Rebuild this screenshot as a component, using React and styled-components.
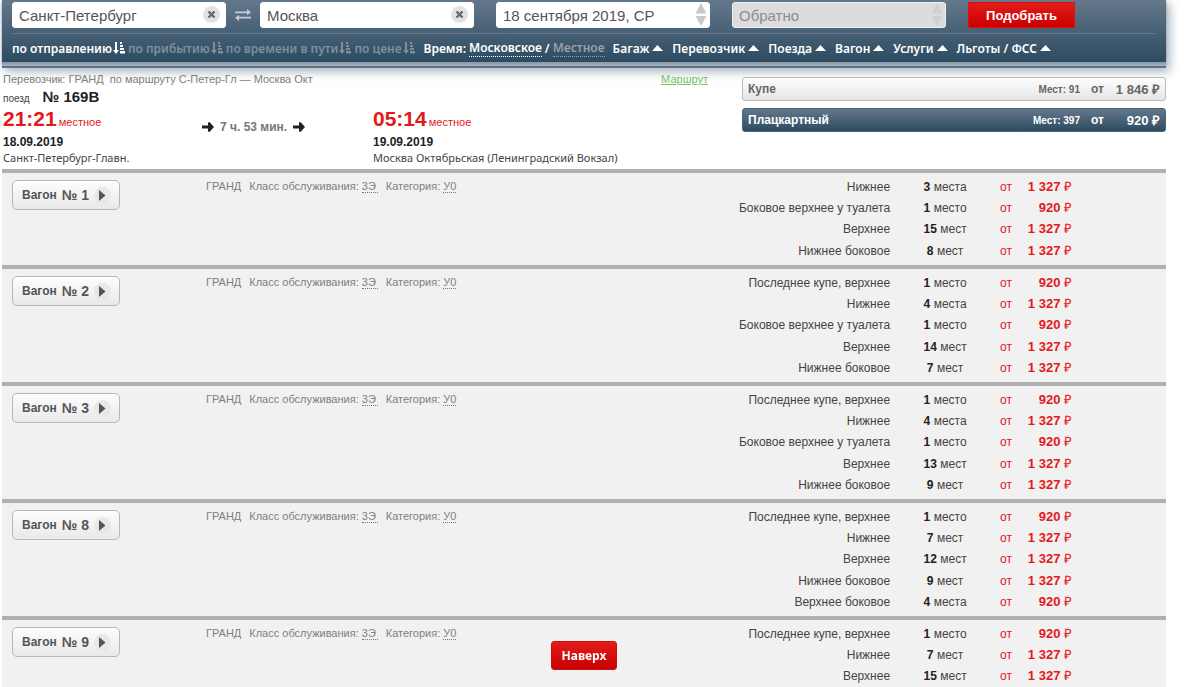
import styled, { createGlobalStyle } from "styled-components";

const GlobalStyle = createGlobalStyle`
  * {
    box-sizing: border-box;
  }
  body {
    margin: 0;
    background: #fff;
    font-family: "Liberation Sans", Arial, sans-serif;
    font-size: 12px;
    color: #444;
  }
  button, input {
    font-family: inherit;
  }
`;

const Page = styled.div`
  margin: 0 34px 0 2px;
`;

/* ---------- header ---------- */

const Header = styled.header`
  border-bottom: 2px solid #5d7389;
  box-shadow: 3px 3px 10px rgba(93, 115, 137, 0.6);
  background: #a3b0bd;
  padding-bottom: 4px;
`;
const Bar = styled.div`
  padding: 2px 10px 0;
  background: linear-gradient(#65788b, #2c4b61);
  box-shadow: 0 2px 2px #8b9aa9;
`;
const SearchForm = styled.form`
  display: flex;
  align-items: flex-start;
  height: 32px;
  border-bottom: 1px solid #64798b;
`;
const Field = styled.div`
  position: relative;
  width: 214px;
  margin-right: ${(p) => (p.$tight ? 0 : "22px")};
`;
const FieldInput = styled.input`
  display: block;
  width: 100%;
  height: 26px;
  padding: 0 30px 0 6px;
  border: 1px solid ${(p) => (p.disabled ? "#eee" : "#fff")};
  border-radius: 3px;
  background: ${(p) => (p.disabled ? "#dcdcdc" : "#fff")};
  color: #555;
  font-size: 15px;
  &::placeholder {
    color: #8c8c8c;
    opacity: 1;
  }
`;
const ClearButton = styled.button`
  position: absolute;
  top: 4px;
  right: 6px;
  width: 17px;
  height: 17px;
  padding: 0;
  border: 0;
  border-radius: 50%;
  background: #e2e2e2;
  display: flex;
  align-items: center;
  justify-content: center;
`;
const Stepper = styled.svg`
  position: absolute;
  top: 1px;
  right: 3px;
  width: 12px;
  height: 23px;
  fill: ${(p) => p.$color};
`;
const SwapButton = styled.button`
  width: 34px;
  height: 26px;
  padding: 0;
  border: 0;
  background: none;
  display: flex;
  align-items: center;
  justify-content: center;
`;
const SubmitButton = styled.button`
  width: 107px;
  height: 26px;
  padding: 0;
  border: 1px solid #e01010;
  background: linear-gradient(#e31b1b, #cb0000);
  color: #fff;
  font-size: 13px;
  font-weight: 700;
`;

const FilterBar = styled.nav`
  display: flex;
  align-items: center;
  height: 28px;
  font-family: "Noto Sans", Tahoma, sans-serif;
  font-size: 12px;
  font-weight: 600;
  color: #fff;
  white-space: nowrap;
`;
const SortButton = styled.button`
  display: flex;
  align-items: center;
  gap: 1px;
  margin-right: 3px;
  padding: 0;
  border: 0;
  background: none;
  color: ${(p) => (p.$active ? "#fff" : "#7c90a0")};
  font-size: 12px;
  font-weight: 600;
`;
const TimeGroup = styled.div`
  display: flex;
  gap: 3px;
  margin: 0 8px 0 6px;
`;
const TimeButton = styled.button`
  padding: 0;
  border: 0;
  border-bottom: 1px dotted currentColor;
  background: none;
  color: ${(p) => (p.$active ? "#fff" : "#9a9fa5")};
  font-size: 12px;
  font-weight: 600;
  line-height: 14px;
`;
const FilterButton = styled.button`
  display: flex;
  align-items: center;
  gap: 3px;
  margin-right: 9px;
  padding: 0;
  border: 0;
  background: none;
  color: #fff;
  font-size: 12px;
  font-weight: 600;
`;

/* ---------- train ---------- */

const Train = styled.section`
  display: grid;
  grid-template-columns: 705px 1fr;
  column-gap: 34px;
  height: 101px;
  padding: 4px 0 0 1px;
`;
const RouteLine = styled.div`
  display: flex;
  gap: 6px;
  color: #7f7f7f;
  font-size: 11px;
  line-height: 15px;
`;
const RouteLink = styled.a`
  margin-left: auto;
  color: #73c35f;
`;
const TrainNumber = styled.div`
  display: flex;
  align-items: baseline;
  gap: 13px;
  height: 20px;
  font-size: 10px;
  line-height: 20px;
  b {
    color: #222;
    font-size: 15px;
  }
`;
const Trip = styled.div`
  display: grid;
  grid-template-columns: 199px 171px 1fr;
`;
const Time = styled.div`
  display: flex;
  align-items: baseline;
  gap: 2px;
  height: 24px;
  color: #e3191b;
  font-size: 11px;
  line-height: 24px;
  b {
    font-size: 21px;
  }
`;
const StopDate = styled.div`
  color: #222;
  font-size: 12px;
  font-weight: 700;
  line-height: 22px;
`;
const Station = styled.div`
  font-family: "Noto Sans", Tahoma, sans-serif;
  font-size: 11px;
  line-height: 10px;
`;
const Duration = styled.div`
  display: flex;
  align-items: center;
  gap: 6px;
  height: 40px;
  color: #777;
  font-size: 12px;
  font-weight: 700;
`;
const Classes = styled.div`
  display: flex;
  flex-direction: column;
  gap: 7px;
  padding-top: 5px;
`;
const ClassButton = styled.button`
  display: grid;
  grid-template-columns: 1fr auto 24px 56px;
  align-items: center;
  height: 24px;
  padding: 0 5px;
  border: 1px solid ${(p) => (p.$active ? "#4c6478" : "#bbb")};
  border-radius: 3px;
  background: ${(p) =>
    p.$active
      ? "linear-gradient(#65788b, #2c4b61)"
      : "linear-gradient(#fdfdfd, #e6e6e6)"};
  color: ${(p) => (p.$active ? "#fff" : "#666")};
  font-size: 12px;
  font-weight: 700;
  text-align: right;
  span:first-child {
    text-align: left;
  }
  small {
    font-size: 10px;
  }
  b {
    font-size: 13px;
  }
`;

/* ---------- wagons ---------- */

const Wagon = styled.section`
  display: grid;
  grid-template-columns: 194px 1fr auto;
  align-items: start;
  padding: 3px 94px 4px 10px;
  border-top: 4px solid #b0b0b0;
  background: #f1f1f1;
  &:last-of-type {
    padding-bottom: 0;
  }
`;
const WagonButton = styled.button`
  display: flex;
  align-items: center;
  gap: 5px;
  width: 108px;
  height: 30px;
  margin-top: 4px;
  padding: 0 9px;
  border: 1px solid #b8b8b8;
  border-radius: 5px;
  background: linear-gradient(#fdfdfd, #e9e9e9);
  color: #555;
  font-size: 12px;
  font-weight: 700;
  white-space: nowrap;
  b {
    font-size: 14px;
  }
  svg {
    flex-shrink: 0;
  }
`;
const WagonInfo = styled.div`
  display: flex;
  gap: 8px;
  color: #808080;
  font-size: 11px;
  line-height: 21px;
`;
const Hint = styled.abbr`
  display: inline-block;
  min-width: ${(p) => (p.$wide ? "16px" : 0)};
  border-bottom: 1px dotted #777;
  line-height: 12px;
  text-decoration: none;
`;
const Seats = styled.table`
  border-collapse: collapse;
  font-size: 12px;
  line-height: 16px;
  white-space: nowrap;
  tr {
    height: 21px;
  }
  tr:nth-child(3n) {
    height: 22px;
  }
  th,
  td {
    padding: 0;
    text-align: right;
    font-weight: 400;
  }
`;
const SeatCount = styled.td`
  width: 110px;
  && {
    text-align: center;
  }
  b {
    color: #222;
  }
`;
const From = styled.td`
  color: #e3191b;
`;
const Price = styled.td`
  width: 60px;
  color: #e3191b;
  font-size: 13px;
`;

const UpBar = styled.div`
  position: fixed;
  left: 2px;
  right: 34px;
  bottom: 17px;
  display: flex;
  justify-content: center;
  pointer-events: none;
`;
const UpButton = styled.button`
  width: 66px;
  height: 29px;
  padding: 0;
  border: 1px solid #d40c0c;
  border-radius: 3px;
  background: linear-gradient(#e31b1b, #c70000);
  color: #fff;
  font-size: 12px;
  font-weight: 700;
  pointer-events: auto;
  && {
    font-family: "Noto Sans", Tahoma, sans-serif;
  }
`;

/* ---------- icons ---------- */

const CrossIcon = () => (
  <svg width="9" height="9" viewBox="0 0 9 9">
    <path d="M1.5 1.5l6 6M7.5 1.5l-6 6" stroke="#666" strokeWidth="2.4" />
  </svg>
);
const SwapIcon = () => (
  <svg width="16" height="12" viewBox="0 0 16 12" fill="#c3ccd4">
    <path d="M0 2.5h12V0l4 3.2-4 3V4.2H0zM16 9.5H4V12L0 8.8l4-3v2h12z" />
  </svg>
);
const SortIcon = () => (
  <svg width="12" height="12" viewBox="0 0 12 12" fill="currentColor">
    <path d="M2 0h2v8h2L3 12 0 8h2zM7 0h2v2H7zM7 3h3v2H7zM7 6h4v2H7zM7 9h5v2.5H7z" />
  </svg>
);
const UpIcon = () => (
  <svg width="11" height="6" viewBox="0 0 11 6" fill="currentColor">
    <path d="M5.5 0L11 6H0z" />
  </svg>
);
const ArrowIcon = () => (
  <svg width="12" height="10" viewBox="0 0 12 10" fill="#222">
    <path d="M0 3.5h6V.5L7.5 0 12 5l-4.5 5L6 9.5v-3H0z" />
  </svg>
);
const PlayIcon = () => (
  <svg width="17" height="17" viewBox="0 0 17 17">
    <circle cx="8.5" cy="8.5" r="8.5" fill="#e8e8e8" />
    <path d="M5 3v11l6.5-5.5z" fill="#555" />
  </svg>
);

const StepperIcon = ({ color }) => (
  <Stepper viewBox="0 0 12 23" $color={color}>
    <path d="M6 0l5.5 10.5H.5zM6 23L.5 13h11z" />
  </Stepper>
);

/* ---------- data ---------- */

const sorts = ["по отправлению", "по прибытию", "по времени в пути", "по цене"];
const filters = ["Багаж", "Перевозчик", "Поезда", "Вагон", "Услуги", "Льготы / ФСС"];

const LAST = "Последнее купе, верхнее";
const LOWER = "Нижнее";
const TOILET = "Боковое верхнее у туалета";
const UPPER = "Верхнее";
const SIDE = "Нижнее боковое";

const wagons = [
  {
    number: 1,
    seats: [
      [LOWER, 3, "места", "1 327"],
      [TOILET, 1, "место", "920"],
      [UPPER, 15, "мест", "1 327"],
      [SIDE, 8, "мест", "1 327"],
    ],
  },
  {
    number: 2,
    seats: [
      [LAST, 1, "место", "920"],
      [LOWER, 4, "места", "1 327"],
      [TOILET, 1, "место", "920"],
      [UPPER, 14, "мест", "1 327"],
      [SIDE, 7, "мест", "1 327"],
    ],
  },
  {
    number: 3,
    seats: [
      [LAST, 1, "место", "920"],
      [LOWER, 4, "места", "1 327"],
      [TOILET, 1, "место", "920"],
      [UPPER, 13, "мест", "1 327"],
      [SIDE, 9, "мест", "1 327"],
    ],
  },
  {
    number: 8,
    seats: [
      [LAST, 1, "место", "920"],
      [LOWER, 7, "мест", "1 327"],
      [UPPER, 12, "мест", "1 327"],
      [SIDE, 9, "мест", "1 327"],
      ["Верхнее боковое", 4, "места", "920"],
    ],
  },
  {
    number: 9,
    seats: [
      [LAST, 1, "место", "920"],
      [LOWER, 7, "мест", "1 327"],
      [UPPER, 15, "мест", "1 327"],
    ],
  },
];

const Stop = ({ time, date, station }) => (
  <div>
    <Time>
      <b>{time}</b> местное
    </Time>
    <StopDate>{date}</StopDate>
    <Station>{station}</Station>
  </div>
);

const App = () => {
  return (
    <Page>
      <GlobalStyle />
      <Header>
        <Bar>
          <SearchForm onSubmit={(e) => e.preventDefault()}>
            <Field $tight>
              <FieldInput aria-label="Откуда" defaultValue="Санкт-Петербург" />
              <ClearButton type="button" aria-label="Очистить">
                <CrossIcon />
              </ClearButton>
            </Field>
            <SwapButton type="button" aria-label="Поменять местами">
              <SwapIcon />
            </SwapButton>
            <Field>
              <FieldInput aria-label="Куда" defaultValue="Москва" />
              <ClearButton type="button" aria-label="Очистить">
                <CrossIcon />
              </ClearButton>
            </Field>
            <Field>
              <FieldInput aria-label="Туда" defaultValue="18 сентября 2019, СР" />
              <StepperIcon color="#c8c8c8" />
            </Field>
            <Field>
              <FieldInput aria-label="Обратно" placeholder="Обратно" disabled />
              <StepperIcon color="#cfcfcf" />
            </Field>
            <SubmitButton>Подобрать</SubmitButton>
          </SearchForm>
          <FilterBar>
            {sorts.map((name, i) => (
              <SortButton key={name} $active={i === 0}>
                {name}
                <SortIcon />
              </SortButton>
            ))}
            <TimeGroup>
              Время: <TimeButton $active>Московское</TimeButton> /{" "}
              <TimeButton>Местное</TimeButton>
            </TimeGroup>
            {filters.map((name) => (
              <FilterButton key={name}>
                {name}
                <UpIcon />
              </FilterButton>
            ))}
          </FilterBar>
        </Bar>
      </Header>

      <Train>
        <div>
          <RouteLine>
            <span>Перевозчик: ГРАНД</span>
            <span>по маршруту С-Петер-Гл — Москва Окт</span>
            <RouteLink href="#route">Маршрут</RouteLink>
          </RouteLine>
          <TrainNumber>
            поезд <b>№ 169В</b>
          </TrainNumber>
          <Trip>
            <Stop
              time="21:21"
              date="18.09.2019"
              station="Санкт-Петербург-Главн."
            />
            <Duration>
              <ArrowIcon />7 ч. 53 мин.
              <ArrowIcon />
            </Duration>
            <Stop
              time="05:14"
              date="19.09.2019"
              station="Москва Октябрьская (Ленинградский Вокзал)"
            />
          </Trip>
        </div>
        <Classes>
          <ClassButton>
            <span>Купе</span>
            <small>Мест: 91</small>
            <span>от</span>
            <b>1 846 ₽</b>
          </ClassButton>
          <ClassButton $active>
            <span>Плацкартный</span>
            <small>Мест: 397</small>
            <span>от</span>
            <b>920 ₽</b>
          </ClassButton>
        </Classes>
      </Train>

      {wagons.map((wagon) => (
        <Wagon key={wagon.number}>
          <WagonButton>
            Вагон <b>№ {wagon.number}</b>
            <PlayIcon />
          </WagonButton>
          <WagonInfo>
            <span>ГРАНД</span>
            <span>
              Класс обслуживания: <Hint $wide>3Э</Hint>
            </span>
            <span>
              Категория: <Hint>У0</Hint>
            </span>
          </WagonInfo>
          <Seats>
            <tbody>
              {wagon.seats.map(([place, count, unit, price]) => (
                <tr key={place}>
                  <th scope="row">{place}</th>
                  <SeatCount>
                    <b>{count}</b> {unit}
                  </SeatCount>
                  <From>от</From>
                  <Price>
                    <b>{price}</b> ₽
                  </Price>
                </tr>
              ))}
            </tbody>
          </Seats>
        </Wagon>
      ))}

      <UpBar>
        <UpButton>Наверх</UpButton>
      </UpBar>
    </Page>
  );
};

export default App;
